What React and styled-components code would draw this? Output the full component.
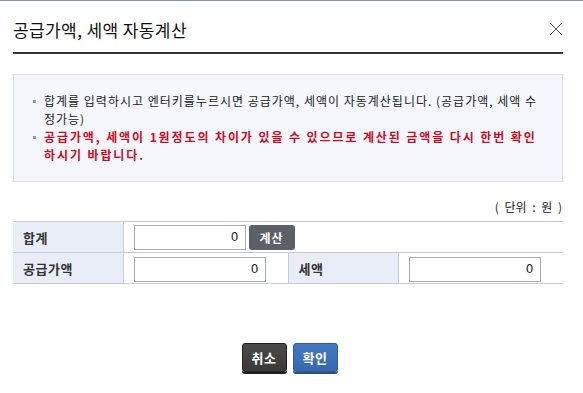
import React from 'react'
import styled, { createGlobalStyle } from 'styled-components'

const GlobalStyle = createGlobalStyle`
  html, body {
    margin: 0;
    padding: 0;
    background: #fff;
  }
  body {
    font-family: "Noto Sans CJK KR", "Noto Sans", sans-serif;
    color: #222;
  }
  * { box-sizing: border-box; }
`;

const Modal = styled.div`
  width: 583px;
  height: 393px;
  border-top: 1px solid #7b96ae;
  background: #fff;
`;

const Header = styled.div`
  height: 53px;
  margin: 0 20px 0 13px;
  display: flex;
  align-items: center;
  justify-content: space-between;
  border-bottom: 2px solid #333;
  padding-top: 5px;
`;

const Title = styled.h1`
  margin: 0;
  font-size: 17px;
  font-weight: 400;
  color: #111;
  letter-spacing: 0.4px;
`;

const CloseButton = styled.button`
  width: 14px;
  height: 14px;
  padding: 0;
  border: none;
  background: none;
  cursor: pointer;
  display: flex;
  svg { display: block; }
`;

const Body = styled.div`
  padding: 20px 20px 0 13px;
`;

const InfoBox = styled.div`
  background: #f5f7fc;
  border: 1px solid #dde1e9;
  padding: 17px 16px 17px 30px;
`;

const InfoList = styled.ul`
  margin: 0;
  padding: 0;
  list-style: none;
`;

const InfoItem = styled.li`
  position: relative;
  font-size: 12px;
  line-height: 18px;
  color: ${p => p.$warn ? '#cf0a1f' : '#222'};
  font-weight: ${p => p.$warn ? 700 : 400};
  letter-spacing: ${p => p.$warn ? '1.9px' : '1px'};

  &::before {
    content: '';
    position: absolute;
    left: -11px;
    top: 8px;
    width: 3px;
    height: 3px;
    background: #9a9a9a;
  }
`;

const Unit = styled.div`
  text-align: right;
  font-size: 12px;
  line-height: 18px;
  margin: 16px 1px 5px 0;
  color: #222;
  word-spacing: 3px;
`;

const Table = styled.table`
  width: 550px;
  border-collapse: collapse;
  table-layout: fixed;
  border-top: 1px solid #c6cad3;
`;

const Row = styled.tr`
  height: 31px;
  border-bottom: 1px solid #c6cad3;
`;

const Label = styled.th`
  background: #e9edf7;
  text-align: left;
  padding: 0 0 0 10px;
  font-size: 13px;
  font-weight: 700;
  color: #333;
  letter-spacing: 0.5px;
  border-right: 1px solid #c6cad3;
  border-left: ${p => p.$inner ? '1px solid #c6cad3' : 'none'};
`;

const Cell = styled.td`
  padding: 0 0 0 10px;
`;

const CellInner = styled.div`
  display: flex;
  align-items: center;
  gap: 3px;
`;

const Amount = styled.input`
  width: ${p => p.$w || 132}px;
  height: 25px;
  border: 1px solid #a9abb0;
  text-align: right;
  padding: 0 6px;
  font-family: "DejaVu Sans", sans-serif;
  font-size: 12px;
  color: #222;
  outline: none;
`;

const CalcButton = styled.button`
  width: 46px;
  height: 25px;
  border: none;
  border-radius: 3px;
  background: #5b6069;
  color: #fff;
  font-family: inherit;
  font-size: 12px;
  font-weight: 700;
  letter-spacing: 1px;
  padding: 0;
  cursor: pointer;
`;

const Footer = styled.div`
  display: flex;
  justify-content: center;
  gap: 6px;
  margin-top: 59px;
  padding-right: 4px;
`;

const ActionButton = styled.button`
  width: 45px;
  height: 29px;
  border-radius: 3px;
  border: 1px solid ${p => p.$primary ? '#2f5d9c' : '#222'};
  background: ${p => p.$primary
    ? 'linear-gradient(#4379c2, #3668ad)'
    : 'linear-gradient(#4a4a4a, #3a3a3a)'};
  box-shadow: 0 2px 0 ${p => p.$primary ? '#2a5089' : '#1f1f1f'};
  color: #fff;
  font-family: inherit;
  font-size: 13px;
  font-weight: 700;
  letter-spacing: 0.5px;
  padding: 0;
  cursor: pointer;
`;

export default function App() {
  return (
    <>
      <GlobalStyle />
      <Modal>
        <Header>
          <Title>공급가액, 세액 자동계산</Title>
          <CloseButton aria-label="닫기">
            <svg width="14" height="14" viewBox="0 0 14 14">
              <path d="M1 1 L13 13 M13 1 L1 13" stroke="#555" strokeWidth="1" fill="none" />
            </svg>
          </CloseButton>
        </Header>
        <Body>
          <InfoBox>
            <InfoList>
              <InfoItem>합계를 입력하시고 엔터키를누르시면 공급가액, 세액이 자동계산됩니다. (공급가액, 세액 수정가능)</InfoItem>
              <InfoItem $warn>공급가액, 세액이 1원정도의 차이가 있을 수 있으므로 계산된 금액을 다시 한번 확인하시기 바랍니다.</InfoItem>
            </InfoList>
          </InfoBox>
          <Unit>( 단위 : 원 )</Unit>
          <Table>
            <colgroup>
              <col style={{ width: 110 }} />
              <col style={{ width: 165 }} />
              <col style={{ width: 110 }} />
              <col style={{ width: 165 }} />
            </colgroup>
            <tbody>
              <Row>
                <Label>합계</Label>
                <Cell colSpan={3}>
                  <CellInner>
                    <Amount $w={112} defaultValue="0" />
                    <CalcButton>계산</CalcButton>
                  </CellInner>
                </Cell>
              </Row>
              <Row>
                <Label>공급가액</Label>
                <Cell>
                  <Amount defaultValue="0" />
                </Cell>
                <Label $inner>세액</Label>
                <Cell>
                  <Amount defaultValue="0" />
                </Cell>
              </Row>
            </tbody>
          </Table>
        </Body>
        <Footer>
          <ActionButton>취소</ActionButton>
          <ActionButton $primary>확인</ActionButton>
        </Footer>
      </Modal>
    </>
  )
}
